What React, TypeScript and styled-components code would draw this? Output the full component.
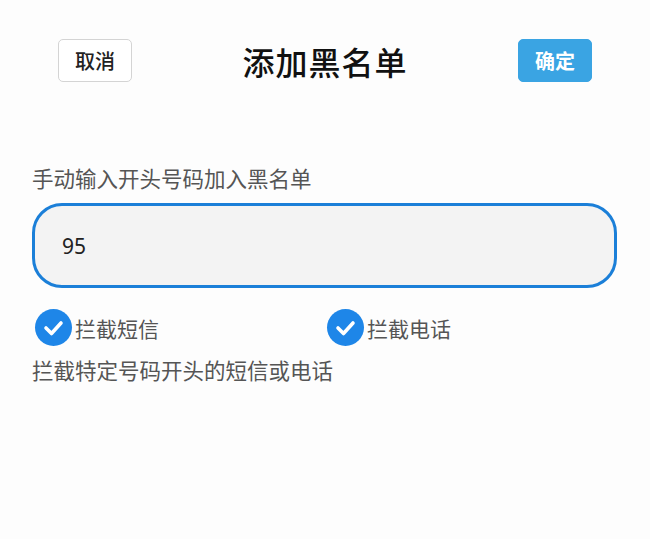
import React from "react";
import styled, { createGlobalStyle } from "styled-components";

const GlobalStyle = createGlobalStyle`
  html, body {
    margin: 0;
    padding: 0;
    background: #fdfdfd;
  }
  body {
    font-family: "Noto Sans CJK SC", "Noto Sans", sans-serif;
  }
`;

const Page = styled.div`
  width: 650px;
  height: 539px;
  box-sizing: border-box;
  padding: 39px 33px 0 32px;
  background: #fdfdfd;
`;

const Header = styled.div`
  display: flex;
  align-items: center;
  justify-content: space-between;
  padding: 0 25px 0 26px;
  height: 43px;
`;

const Button = styled.button<{ $primary?: boolean }>`
  width: 74px;
  height: 43px;
  box-sizing: border-box;
  border-radius: 5px;
  border: 1px solid ${({ $primary }) => ($primary ? "#3aa4e3" : "#d4d4d4")};
  background: ${({ $primary }) => ($primary ? "#3aa4e3" : "#fff")};
  color: ${({ $primary }) => ($primary ? "#fff" : "#222")};
  font-family: "Noto Sans CJK SC", sans-serif;
  font-size: 20px;
  font-weight: ${({ $primary }) => ($primary ? 700 : 500)};
  padding: 0;
  cursor: pointer;
`;

const Title = styled.h1`
  margin: 0;
  font-size: 32px;
  font-weight: 500;
  color: #111;
  letter-spacing: 1px;
`;

const Label = styled.div`
  margin-top: 81px;
  font-size: 21.5px;
  line-height: 30px;
  color: #555;
`;

const InputBox = styled.div`
  margin-top: 10px;
  height: 85px;
  box-sizing: border-box;
  border: 3px solid #1b7fd8;
  border-radius: 30px;
  background: #f3f3f3;
  display: flex;
  align-items: center;
  padding-left: 27px;
  font-family: "Noto Sans", sans-serif;
  font-size: 21px;
  color: #222;
`;

const OptionRow = styled.div`
  margin-top: 21px;
  padding-left: 3px;
  display: grid;
  grid-template-columns: 292px 1fr;
`;

const Option = styled.label`
  display: flex;
  align-items: center;
  gap: 3px;
  font-size: 21px;
  color: #555;
  height: 37px;
`;

const Check = styled.span`
  width: 37px;
  height: 37px;
  border-radius: 50%;
  background: #1e86e8;
  display: flex;
  align-items: center;
  justify-content: center;
`;

const Hint = styled.div`
  margin-top: 9px;
  font-size: 21.5px;
  line-height: 30px;
  color: #555;
`;

const CheckIcon = () => (
  <Check>
    <svg width="37" height="37" viewBox="0 0 37 37">
      <path
        d="M11 19 L16.5 24.5 L26 14"
        fill="none"
        stroke="#fff"
        strokeWidth="3.6"
        strokeLinecap="round"
        strokeLinejoin="round"
      />
    </svg>
  </Check>
);

const App = () => {
  return (
    <Page>
      <GlobalStyle />
      <Header>
        <Button>取消</Button>
        <Title>添加黑名单</Title>
        <Button $primary>确定</Button>
      </Header>
      <Label>手动输入开头号码加入黑名单</Label>
      <InputBox>95</InputBox>
      <OptionRow>
        <Option>
          <CheckIcon />
          拦截短信
        </Option>
        <Option>
          <CheckIcon />
          拦截电话
        </Option>
      </OptionRow>
      <Hint>拦截特定号码开头的短信或电话</Hint>
    </Page>
  );
};

export default App;
